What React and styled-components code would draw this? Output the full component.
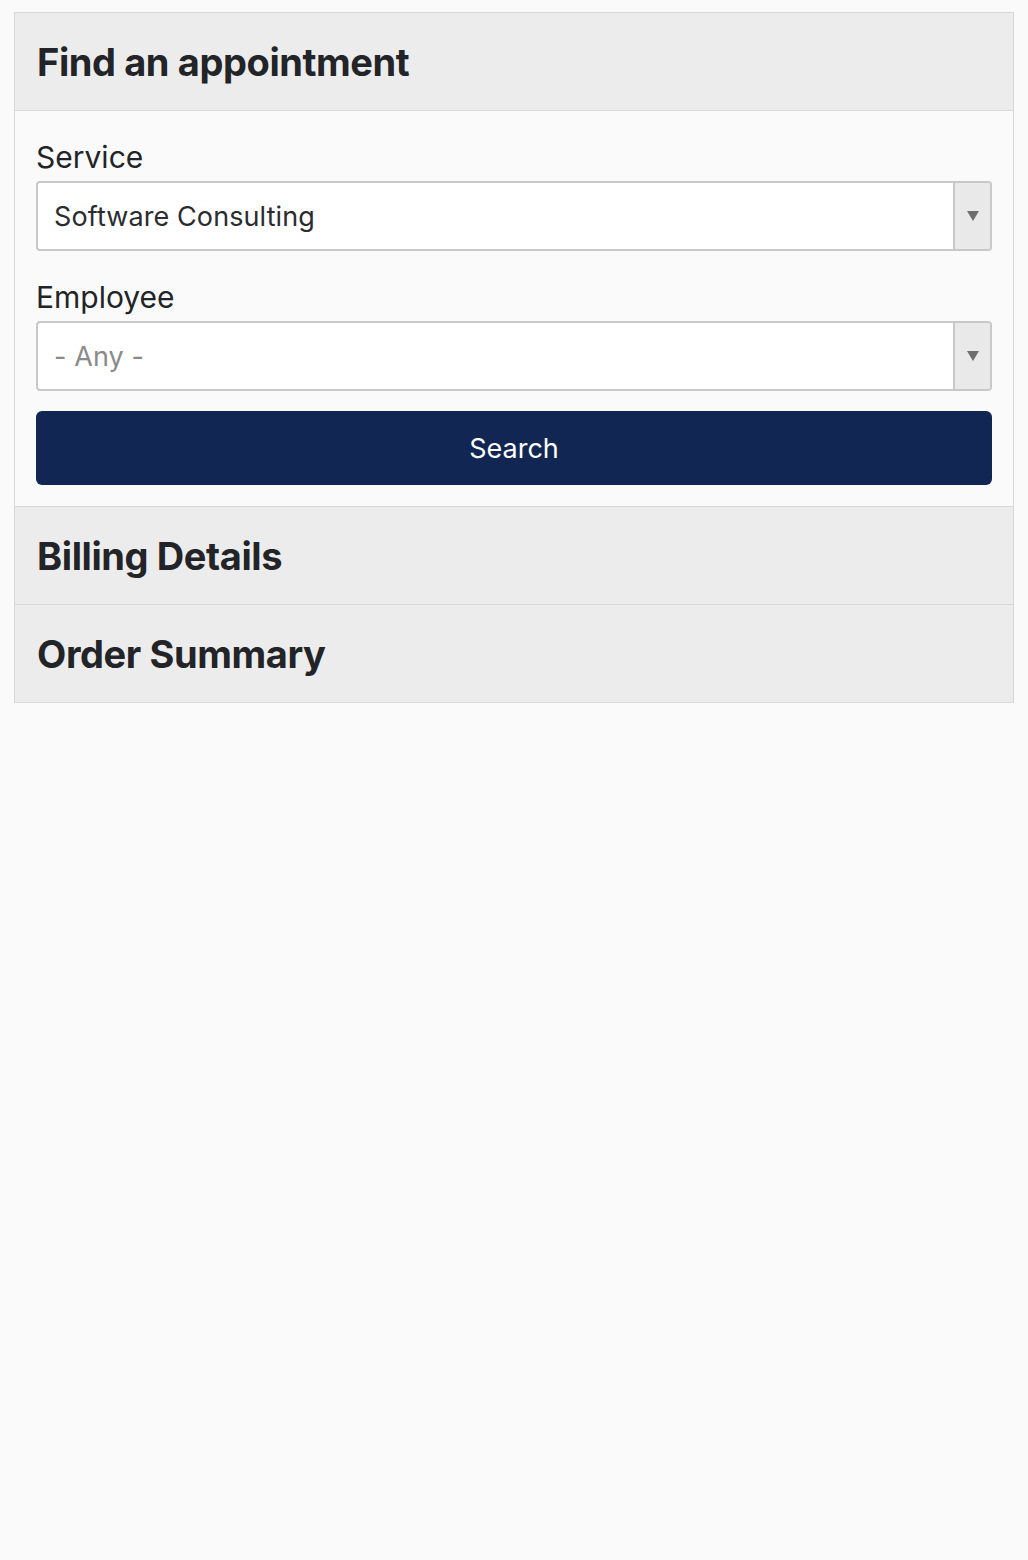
import React from "react";
import styled, { createGlobalStyle } from "styled-components";

const GlobalStyle = createGlobalStyle`
  html, body {
    margin: 0;
    padding: 0;
    background: #fafafa;
  }
  body {
    font-family: Inter, "Noto Sans", "Liberation Sans", sans-serif;
    color: #222428;
  }
`;

const Page = styled.div`
  padding: 12px 14px;
  min-height: 1536px;
  box-sizing: border-box;
`;

const Panel = styled.div`
  border: 1px solid #d8d8d8;
  background: #fafafa;
`;

const SectionHeader = styled.div`
  display: flex;
  align-items: center;
  height: 98px;
  box-sizing: border-box;
  padding: 0 22px;
  background: #ececec;
  border-top: ${(p) => (p.first ? "none" : "1px solid #d8d8d8")};
  border-bottom: ${(p) => (p.first ? "1px solid #d8d8d8" : "none")};
`;

const Title = styled.h2`
  margin: 0;
  font-size: 38px;
  font-weight: 700;
  letter-spacing: -0.4px;
`;

const Body = styled.div`
  padding: 20px 21px 21px;
  display: flex;
  flex-direction: column;
`;

const Field = styled.div`
  display: flex;
  flex-direction: column;
  margin-bottom: 20px;
`;

const Label = styled.label`
  font-size: 30px;
  line-height: 48px;
  padding-top: 2px;
`;

const SelectBox = styled.div`
  display: flex;
  height: 70px;
  box-sizing: border-box;
  border: 2px solid #c8c8c8;
  border-radius: 4px;
  background: #ffffff;
  overflow: hidden;
`;

const SelectValue = styled.div`
  flex: 1;
  display: flex;
  align-items: center;
  padding: 0 16px;
  font-size: 27px;
  letter-spacing: 0.1px;
  color: ${(p) => (p.placeholder ? "#8a8a8a" : "#2a2c30")};
`;

const Arrow = styled.div`
  width: 35px;
  border-left: 2px solid #c8c8c8;
  background: #e9e9e9;
  display: flex;
  align-items: center;
  justify-content: center;
`;

const SearchButton = styled.button`
  height: 74px;
  border: none;
  border-radius: 6px;
  background: #112652;
  color: #ffffff;
  font-family: inherit;
  font-size: 27px;
  cursor: pointer;
`;

const Select = ({ value, placeholder }) => (
  <SelectBox>
    <SelectValue placeholder={placeholder ? 1 : 0}>{value}</SelectValue>
    <Arrow>
      <svg width="12" height="10" viewBox="0 0 12 10">
        <path d="M0 0 L12 0 L6 10 Z" fill="#6e6e6e" />
      </svg>
    </Arrow>
  </SelectBox>
);

export default function App() {
  return (
    <>
      <GlobalStyle />
      <Page>
        <Panel>
          <SectionHeader first>
            <Title>Find an appointment</Title>
          </SectionHeader>
          <Body>
            <Field>
              <Label>Service</Label>
              <Select value="Software Consulting" />
            </Field>
            <Field>
              <Label>Employee</Label>
              <Select value="- Any -" placeholder />
            </Field>
            <SearchButton>Search</SearchButton>
          </Body>
          <SectionHeader>
            <Title>Billing Details</Title>
          </SectionHeader>
          <SectionHeader>
            <Title>Order Summary</Title>
          </SectionHeader>
        </Panel>
      </Page>
    </>
  );
}
